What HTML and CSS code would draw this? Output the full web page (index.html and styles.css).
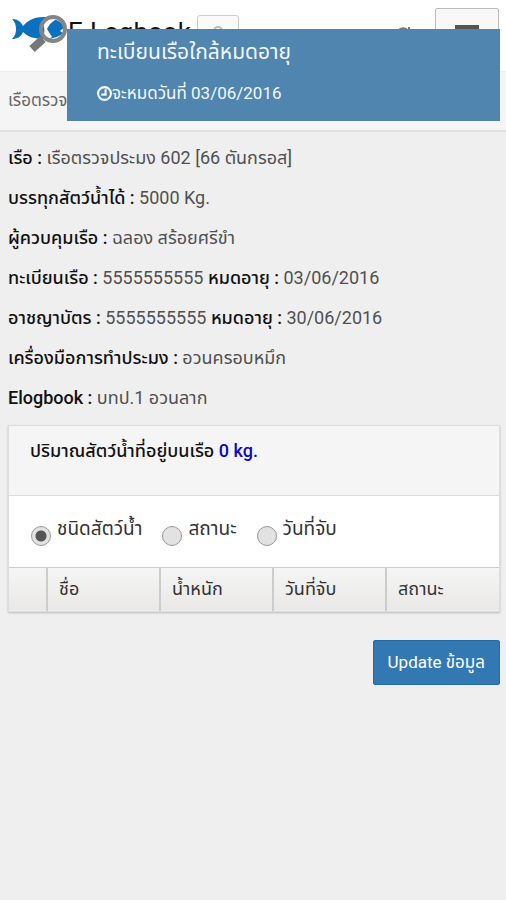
FILE: index.html
```html
<!DOCTYPE html>
<html lang="th">
<head>
<meta charset="utf-8">
<meta name="viewport" content="width=device-width, initial-scale=1">
<title>E-Logbook</title>
<link rel="stylesheet" href="styles.css">
</head>
<body>
<header class="header">
  <a class="brand" href="#">
    <svg class="logo" viewBox="0 0 56 42" aria-hidden="true">
      <path fill="#0b70bd" d="M0 5c6 0 9 3 11 7C16 6 23 3 31 3c10 0 18 4 22 10l-5 4 3 2c-4 4-11 6-19 6-9 0-16-2-21-7-2 5-6 7-11 7 3-3 4-6 4-10s-1-7-4-10z"/>
      <path stroke="#777" stroke-width="8" d="M31 25 20 35"/>
      <path fill="#fff" d="M30 9c2-4 6-7 11-7 4 0 8 2 10 5l-8-1-5 4-3 5 5 8-3 2c-5-2-8-6-8-11z"/>
      <path fill="#0b70bd" d="M30 10c3 3 3 8 1 12l-3-7z"/>
      <circle cx="41" cy="15" r="12" stroke="#858585" stroke-width="4"/>
    </svg>
    <span>E-Logbook</span>
  </a>
  <button class="search" type="button" aria-label="ค้นหา">
    <svg viewBox="0 0 16 16" aria-hidden="true"><circle cx="8" cy="7" r="4"/><path d="m11 10 4 4"/></svg>
  </button>
  <button class="refresh" type="button" aria-label="โหลดใหม่">
    <svg viewBox="0 0 16 16" aria-hidden="true"><path d="M13 5A6 6 0 1 0 14 9M14 1v5H9"/></svg>
  </button>
  <button class="menu" type="button" aria-label="เมนู"><span></span><span></span><span></span></button>
</header>
<nav class="crumb"><a href="#">เรือตรวจ</a></nav>
<aside class="toast" role="status">
  <h2>ทะเบียนเรือใกล้หมดอายุ</h2>
  <p><svg viewBox="0 0 14 14" aria-hidden="true"><circle cx="7" cy="7" r="6"/><path d="M8 3v5H4"/></svg>จะหมดวันที่ 03/06/2016</p>
</aside>
<main class="content">
  <section class="details">
    <p><b>เรือ :</b> เรือตรวจประมง 602 [66 ตันกรอส]</p>
    <p><b>บรรทุกสัตว์น้ำได้ :</b> 5000 Kg.</p>
    <p><b>ผู้ควบคุมเรือ :</b> ฉลอง สร้อยศรีขำ</p>
    <p><b>ทะเบียนเรือ :</b> 5555555555 <b>หมดอายุ :</b> 03/06/2016</p>
    <p><b>อาชญาบัตร :</b> 5555555555 <b>หมดอายุ :</b> 30/06/2016</p>
    <p><b>เครื่องมือการทำประมง :</b> อวนครอบหมึก</p>
    <p><b>Elogbook :</b> บทป.1 อวนลาก</p>
  </section>
  <section class="panel">
    <h3 class="panel-head">ปริมาณสัตว์น้ำที่อยู่บนเรือ <span>0 kg.</span></h3>
    <form class="filters">
      <label><input type="radio" name="group" checked><span>ชนิดสัตว์น้ำ</span></label>
      <label><input type="radio" name="group"><span>สถานะ</span></label>
      <label><input type="radio" name="group"><span>วันที่จับ</span></label>
    </form>
    <table class="catch">
      <thead><tr><td class="index"></td><th>ชื่อ</th><th>น้ำหนัก</th><th>วันที่จับ</th><th>สถานะ</th></tr></thead>
    </table>
  </section>
  <div class="actions"><button class="update" type="button">Update ข้อมูล</button></div>
</main>
</body>
</html>
```
FILE: styles.css
```css
* { box-sizing: border-box; }
body {
  margin: 0;
  background: #efefef;
  color: #505050;
  font-family: Roboto, "Noto Sans Thai", "Noto Sans", sans-serif;
  font-size: 18px;
  line-height: 24px;
}
h2, h3, p { margin: 0; }
a { color: inherit; text-decoration: none; }
svg { fill: none; stroke: currentColor; stroke-width: 2; }

.header {
  display: flex;
  align-items: flex-start;
  height: 72px;
  padding: 8px 7px 0 12px;
  background: #fff;
  border-bottom: 1px solid #eee;
}
.brand { display: flex; padding-top: 6px; color: #111; font-size: 26px; line-height: 36px; }
.logo { width: 56px; height: 42px; }
.logo path { stroke-linecap: butt; }
.logo path[fill] { stroke: none; }
.search {
  width: 42px;
  height: 36px;
  margin: 7px 0 0 6px;
  padding: 0;
  border: 1px solid #ccc;
  border-radius: 3px;
  background: #fafafa;
  color: #bbb;
}
.search svg { width: 16px; height: 16px; }
.refresh { margin: 18px 24px 0 auto; padding: 0; border: 0; background: none; color: #777; }
.refresh svg { width: 16px; height: 16px; }
.menu {
  display: flex;
  flex-direction: column;
  align-items: center;
  gap: 5px;
  width: 64px;
  height: 50px;
  padding: 16px 0 0;
  border: 1px solid #bbb;
  border-radius: 2px;
  background: #f8f8f8;
}
.menu span { width: 24px; height: 4px; background: #555; }

.crumb {
  height: 60px;
  padding: 16px 8px;
  border-bottom: 2px solid #e0e0e0;
  background: #f5f5f5;
  color: #666;
  font-size: 17px;
}
.toast {
  position: absolute;
  top: 29px;
  left: 67px;
  right: 6px;
  padding: 10px 30px 16px;
  background: #4f85af;
  color: #f4f8fb;
}
.toast h2 { margin-bottom: 16px; font-size: 21px; font-weight: 400; line-height: 26px; }
.toast p { display: flex; align-items: center; font-size: 17px; }
.toast svg { width: 15px; height: 15px; }

.content { padding: 6px 6px 0 8px; }
.details p { line-height: 40px; }
.details b { color: #111; font-weight: 500; }

.panel { margin-top: 7px; border: 1px solid #ddd; background: #fff; box-shadow: 0 1px 2px #bbb; }
.panel-head {
  height: 70px;
  padding: 13px 21px;
  border-bottom: 1px solid #ddd;
  background: #f5f5f5;
  color: #111;
  font-size: 18px;
  font-weight: 500;
}
.panel-head span { color: #0909c8; }
.filters { display: flex; gap: 20px; padding: 21px 22px; }
.filters label { display: flex; gap: 6px; color: #333; font-size: 19px; }
.filters input {
  appearance: none;
  width: 20px;
  height: 20px;
  margin: 9px 0 0;
  border: 1px solid #999;
  border-radius: 50%;
  background: #e2e2e2;
}
.filters input:checked { background: radial-gradient(circle, #555 5px, #e2e2e2 6px); }
.catch { width: 100%; border-collapse: collapse; table-layout: fixed; background: linear-gradient(#f5f5f5, #e9e8e6); }
.catch th, .catch td { height: 43px; padding: 0 11px; border-top: 1px solid #ccc; }
.catch th { border-left: 2px solid #ccc; color: #333; font-weight: 400; text-align: left; }
.catch .index { width: 38px; }

.actions { display: flex; justify-content: flex-end; margin-top: 28px; }
.update {
  padding: 10px 14px;
  border: 1px solid #266ba5;
  border-radius: 2px;
  background: #3278b3;
  color: #fff;
  font: inherit;
  font-size: 17px;
  line-height: 23px;
}
```
